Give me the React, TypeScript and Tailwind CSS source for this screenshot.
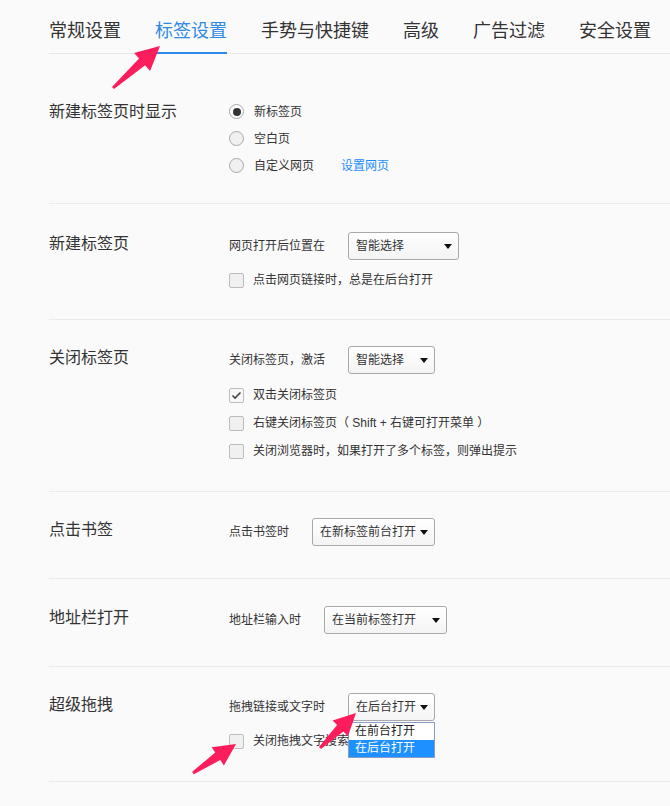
import type { ReactNode } from 'react'

const font = 'font-["Liberation_Sans","Noto_Sans_CJK_SC",sans-serif]'

const tabs = ['常规设置', '标签设置', '手势与快捷键', '高级', '广告过滤', '安全设置']

function Section({ label, className, labelClass = '', colClass = 'gap-[7px]', children }: { label: string; className: string; labelClass?: string; colClass?: string; children: ReactNode }) {
  return (
    <div className={`flex border-b border-[#ebebeb] ${className}`}>
      <div className={`w-[180px] shrink-0 text-[16px] leading-[24px] text-[#333] ${labelClass}`}>{label}</div>
      <div className={`flex flex-col ${colClass}`}>{children}</div>
    </div>
  )
}

function Select({ text, className, open = false }: { text: string; className: string; open?: boolean }) {
  return (
    <div className={`relative ml-[23px] h-[28px] ${className}`}>
      <div className="flex h-full items-center justify-between rounded-[3px] border border-[#a9a9a9] bg-gradient-to-b from-white to-[#f4f4f4] pl-[7px] pr-[6px] text-[12px] text-[#333]">
        <span>{text}</span>
        <span className="h-0 w-0 border-x-[4px] border-t-[5px] border-x-transparent border-t-[#111]" />
      </div>
      {open && (
        <div className="absolute left-0 top-[29px] w-full border border-[#8a9cc4] bg-white text-[12px]">
          <div className="h-[17px] pl-[6px] leading-[17px] text-[#222]">在前台打开</div>
          <div className="h-[17px] bg-[#1e90ff] pl-[6px] leading-[17px] text-white">在后台打开</div>
        </div>
      )}
    </div>
  )
}

function Checkbox({ text, checked = false }: { text: string; checked?: boolean }) {
  return (
    <div className="flex h-[28px] items-center gap-[9px] text-[12px] text-[#333]">
      <span className={`flex h-[15px] w-[15px] items-center justify-center rounded-[2px] border border-[#bdbdbd] ${checked ? 'bg-[#f7f7f7]' : 'bg-[#f0f0f0]'}`}>
        {checked && (
          <svg width="11" height="9" viewBox="0 0 11 9">
            <polyline points="1.5,4.5 4,7 9.5,1.5" fill="none" stroke="#444" strokeWidth="1.6" />
          </svg>
        )}
      </span>
      <span>{text}</span>
    </div>
  )
}

function Radio({ text, checked = false, children }: { text: string; checked?: boolean; children?: ReactNode }) {
  return (
    <div className="flex h-[27px] items-center gap-[10px] text-[12px] text-[#333]">
      <span className={`flex h-[15px] w-[15px] items-center justify-center rounded-full border border-[#a8a8a8] ${checked ? 'bg-white' : 'bg-[#f0f0f0]'}`}>
        {checked && <span className="h-[8px] w-[8px] rounded-full bg-[#333]" />}
      </span>
      <span>{text}</span>
      {children}
    </div>
  )
}

function Row({ text, children }: { text: string; children: ReactNode }) {
  return (
    <div className="flex h-[28px] items-center text-[12px] text-[#333]">
      <span>{text}</span>
      {children}
    </div>
  )
}

// polygon for an annotation arrow, tapered shaft + triangle head
function arrow(t: [number, number], p: [number, number], headLen: number, headW: number) {
  const dx = p[0] - t[0]
  const dy = p[1] - t[1]
  const len = Math.hypot(dx, dy)
  const ux = dx / len
  const uy = dy / len
  const nx = -uy
  const ny = ux
  const bx = p[0] - ux * headLen
  const by = p[1] - uy * headLen
  const pts = [
    [t[0] + nx * 1.5, t[1] + ny * 1.5],
    [bx + nx * 4.5, by + ny * 4.5],
    [bx + nx * headW / 2, by + ny * headW / 2],
    [p[0], p[1]],
    [bx - nx * headW / 2, by - ny * headW / 2],
    [bx - nx * 4.5, by - ny * 4.5],
    [t[0] - nx * 1.5, t[1] - ny * 1.5],
  ]
  return pts.map(([x, y]) => `${x.toFixed(1)},${y.toFixed(1)}`).join(' ')
}

export default function App() {
  return (
    <div className={`relative min-h-screen w-full bg-[#fafafa] ${font}`}>
      <div className="ml-[49px] flex h-[54px] items-end gap-[34px] border-b border-[#e8e8e8]">
        {tabs.map((t, i) => (
          <div
            key={t}
            className={`-mb-px border-b-2 pb-[9px] text-[18px] leading-[24px] ${i === 1 ? 'border-[#2f8ae6] text-[#2f8ae6]' : 'border-transparent text-[#333]'}`}
          >
            {t}
          </div>
        ))}
      </div>

      <div className="ml-[49px]">
        <Section label="新建标签页时显示" className="pt-[42px] pb-[24px]" labelClass="mt-[4px]" colClass="mt-[2px]">
          <Radio text="新标签页" checked />
          <Radio text="空白页" />
          <Radio text="自定义网页">
            <span className="ml-[17px] text-[#1a8cff]">设置网页</span>
          </Radio>
        </Section>

        <Section label="新建标签页" className="pt-[28px] pb-[25px]" colClass="gap-[6px]">
          <Row text="网页打开后位置在">
            <Select text="智能选择" className="w-[111px]" />
          </Row>
          <Checkbox text="点击网页链接时，总是在后台打开" />
        </Section>

        <Section label="关闭标签页" className="pt-[26px] pb-[26px]">
          <Row text="关闭标签页，激活">
            <Select text="智能选择" className="w-[87px]" />
          </Row>
          <div className="flex flex-col">
            <Checkbox text="双击关闭标签页" checked />
            <Checkbox text="右键关闭标签页（ Shift + 右键可打开菜单 ）" />
            <Checkbox text="关闭浏览器时，如果打开了多个标签，则弹出提示" />
          </div>
        </Section>

        <Section label="点击书签" className="pt-[26px] pb-[32px]">
          <Row text="点击书签时">
            <Select text="在新标签前台打开" className="w-[123px]" />
          </Row>
        </Section>

        <Section label="地址栏打开" className="pt-[27px] pb-[32px]">
          <Row text="地址栏输入时">
            <Select text="在当前标签打开" className="w-[123px]" />
          </Row>
        </Section>

        <Section label="超级拖拽" className="pt-[26px] pb-[26px]" colClass="gap-[6px]">
          <div className="relative z-10">
            <Row text="拖拽链接或文字时">
              <Select text="在后台打开" className="w-[87px]" open />
            </Row>
          </div>
          <Checkbox text="关闭拖拽文字搜索" />
        </Section>
      </div>

      <svg className="pointer-events-none absolute left-0 top-0 z-20" width="670" height="806">
        <polygon points={arrow([113, 88], [160, 46], 24, 24)} fill="#fd1c5c" />
        <polygon points={arrow([193, 773], [236, 744], 22, 22)} fill="#fd1c5c" />
        <polygon points={arrow([320, 748], [356, 713], 22, 22)} fill="#fd1c5c" />
      </svg>
    </div>
  )
}
